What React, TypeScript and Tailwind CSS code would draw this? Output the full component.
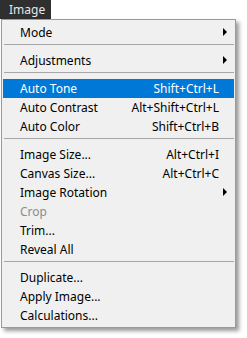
import React from 'react';

type Item =
  | { kind: 'sep' }
  | { kind: 'item'; label: string; shortcut?: string; sub?: boolean; active?: boolean; disabled?: boolean };

const items: Item[] = [
  { kind: 'item', label: 'Mode', sub: true },
  { kind: 'sep' },
  { kind: 'item', label: 'Adjustments', sub: true },
  { kind: 'sep' },
  { kind: 'item', label: 'Auto Tone', shortcut: 'Shift+Ctrl+L', active: true },
  { kind: 'item', label: 'Auto Contrast', shortcut: 'Alt+Shift+Ctrl+L' },
  { kind: 'item', label: 'Auto Color', shortcut: 'Shift+Ctrl+B' },
  { kind: 'sep' },
  { kind: 'item', label: 'Image Size...', shortcut: 'Alt+Ctrl+I' },
  { kind: 'item', label: 'Canvas Size...', shortcut: 'Alt+Ctrl+C' },
  { kind: 'item', label: 'Image Rotation', sub: true },
  { kind: 'item', label: 'Crop', disabled: true },
  { kind: 'item', label: 'Trim...' },
  { kind: 'item', label: 'Reveal All' },
  { kind: 'sep' },
  { kind: 'item', label: 'Duplicate...' },
  { kind: 'item', label: 'Apply Image...' },
  { kind: 'item', label: 'Calculations...' },
];

function MenuRow({ item }: { item: Extract<Item, { kind: 'item' }> }) {
  const color = item.active ? 'bg-[#0078d7] text-white' : item.disabled ? 'text-[#8c8c8c]' : 'text-black';
  return (
    <div className={`relative flex h-[19px] items-center justify-between pl-[17px] pr-[15px] ${color}`}>
      <span>{item.label}</span>
      {item.shortcut && <span>{item.shortcut}</span>}
      {item.sub && (
        <span className="absolute right-[7px] top-[5px] h-0 w-0 border-y-[4px] border-l-[4px] border-y-transparent border-l-black" />
      )}
    </div>
  );
}

export default function App() {
  return (
    <div
      className="h-[338px] w-[247px] overflow-hidden bg-white text-[12px] leading-none"
      style={{ fontFamily: '"Noto Sans", "Open Sans", Arial, sans-serif' }}
    >
      <div className="flex h-[19px] w-[51px] items-center bg-[#2f2f2f] pl-[9px] text-[#e8e8e8]">Image</div>
      <div className="ml-[1px] w-[235px] border border-[#9a9a9a] bg-[#f0f0f0] px-[1px] pb-[2px] pt-[3px] shadow-[3px_3px_4px_rgba(0,0,0,0.4)]">
        {items.map((item, i) =>
          item.kind === 'sep' ? (
            <div key={i} className="h-[9px] pl-[1px] pt-[2px]">
              <div className="h-px bg-[#a6a6a6]" />
            </div>
          ) : (
            <MenuRow key={i} item={item} />
          )
        )}
      </div>
    </div>
  );
}
